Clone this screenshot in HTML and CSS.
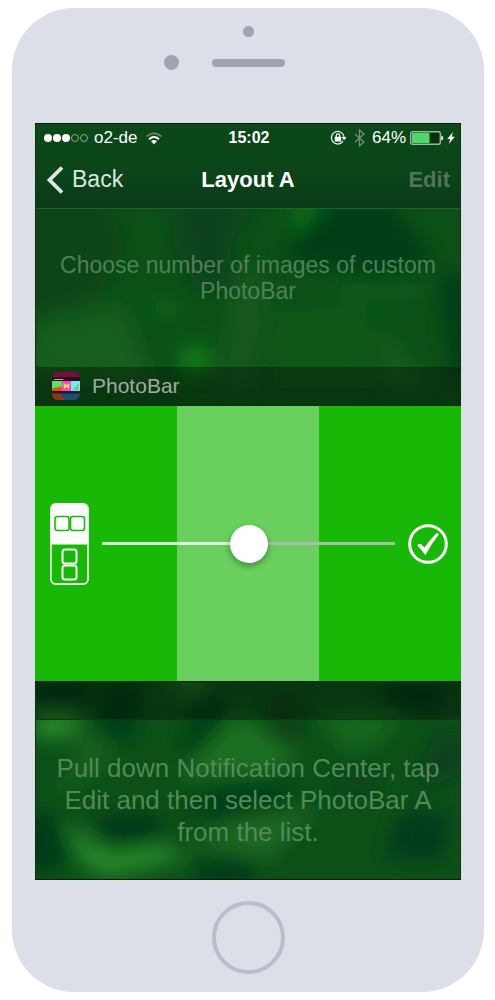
FILE: index.html
```html
<!DOCTYPE html>
<html lang="en">
<head>
<meta charset="utf-8">
<meta name="viewport" content="width=device-width, initial-scale=1">
<title>PhotoBar – Layout A</title>
<link rel="stylesheet" href="styles.css">
</head>
<body>
<div class="phone">
  <div class="bezel-top">
    <span class="camera"></span>
    <div class="earpiece">
      <span class="sensor"></span>
      <span class="speaker"></span>
    </div>
  </div>

  <main class="screen">
    <svg class="wallpaper" viewBox="0 0 426 757" preserveAspectRatio="none" aria-hidden="true">
      <defs>
        <filter id="soft" x="-50%" y="-50%" width="200%" height="200%"><feGaussianBlur stdDeviation="10"/></filter>
      </defs>
      <rect width="426" height="757" fill="#0c5018"/>
      <g filter="url(#soft)">
        <path d="M-20 70H75L90 130L60 175L-20 200Z" fill="#094418"/>
        <path d="M135 70H225L195 120L200 170L160 165L140 120Z" fill="#0b431b"/>
        <path d="M285 75H355L400 140L340 150L245 135Z" fill="#053c18"/>
        <path d="M255 75H295L262 115Z" fill="#0d6a18"/>
        <path d="M405 150H440V250H415Z" fill="#053c18"/>
        <path d="M0 200L90 180L120 260L-10 250Z" fill="#155e1b"/>
        <path d="M105 170L150 180L135 205Z" fill="#0c5f18"/>
        <ellipse cx="160" cy="238" rx="16" ry="18" fill="#0d7a18"/>
        <path d="M200 145L225 150L232 200L215 265L185 260Z" fill="#18581f"/>
        <path d="M240 190L330 180L340 265H240Z" fill="#0c5818"/>
        <path d="M345 200L390 260H350Z" fill="#165f1c"/>
        <path d="M300 160H390V175L310 180Z" fill="#10581a"/>

        <path d="M0 560L60 560L50 580L0 585Z" fill="#063916"/>
        <path d="M65 560H110L95 622H65Z" fill="#053c16"/>
        <path d="M160 575H195L165 640H145Z" fill="#063f18"/>
        <path d="M230 575H265L270 620H240Z" fill="#073f18"/>
        <path d="M350 560H410V585H350Z" fill="#053516"/>
        <ellipse cx="155" cy="560" rx="17" ry="8" fill="#2b7a24"/>
        <ellipse cx="20" cy="603" rx="26" ry="13" fill="#2a8c2c"/>
        <path d="M50 610L82 620L70 645L20 675Z" fill="#17601e"/>
        <path d="M205 590L265 635L235 650L140 655Z" fill="#1c7022"/>
        <path d="M280 590H370L345 620L310 630Z" fill="#17681f"/>
        <path d="M400 610H430V650L380 670Z" fill="#073f1a"/>
        <ellipse cx="320" cy="660" rx="24" ry="10" fill="#07411a"/>
        <path d="M200 660L265 663L250 682L190 695L140 690Z" fill="#043c17"/>
        <path d="M55 695L120 690L130 715L95 730L65 715Z" fill="#023917"/>
        <path d="M-20 690H20L35 735L10 750H-20Z" fill="#023b18"/>
        <path d="M28 700L75 730L125 722L155 735L75 755L50 745Z" fill="#258a2a"/>
        <path d="M210 695L285 685L255 715L235 738L150 720Z" fill="#1a6720"/>
        <path d="M160 738L225 742L215 770H160Z" fill="#033b17"/>
        <path d="M365 690H415L405 740L350 735Z" fill="#033b1a"/>
      </g>
    </svg>

    <header class="top">
      <div class="status">
        <div class="status-left">
          <svg class="signal" width="46" height="10" viewBox="0 0 46 10" aria-hidden="true">
            <g fill="#fff"><circle cx="5" cy="5" r="4"/><circle cx="14" cy="5" r="4"/><circle cx="23" cy="5" r="4"/></g>
            <g fill="none" stroke="#91a795" stroke-width="1"><circle cx="32" cy="5" r="3.5"/><circle cx="41" cy="5" r="3.5"/></g>
          </svg>
          <span>o2-de</span>
          <svg class="wifi" width="18" height="14" viewBox="0 0 18 14" fill="none" aria-hidden="true">
            <path d="M1.500 5.500Q9-1 16.500 5.500" stroke="#67816b" stroke-width="1.800"/>
            <path d="M4 8.200Q9 3.800 14 8.200" stroke="#fff" stroke-width="2"/>
            <path d="M6 10.300Q9 7.900 12 10.300L9 13.300Z" fill="#fff"/>
          </svg>
        </div>
        <time class="clock">15:02</time>
        <div class="status-right">
          <svg width="17" height="16" viewBox="0 0 17 16" fill="none" aria-hidden="true">
            <path d="M13 11.200A6.300 6.300 0 1 1 14 7" stroke="#dfe7e0" stroke-width="1.300"/>
            <path d="M11.600 7H16.600L14.100 10.300Z" fill="#fff"/>
            <rect x="4.800" y="6.800" width="6.400" height="4.700" rx=".5" fill="#fff"/>
            <path d="M6.200 7V5.700a1.800 1.800 0 0 1 3.600 0V7" stroke="#fff" stroke-width="1.200"/>
          </svg>
          <svg class="bluetooth" width="11" height="18" viewBox="0 0 11 18" fill="none" aria-hidden="true">
            <path d="M1 5L10 13L5.500 17V1L10 5L1 13" stroke="#71907a" stroke-width="1.300"/>
          </svg>
          <span>64%</span>
          <svg class="battery" width="34" height="14" viewBox="0 0 34 14" aria-hidden="true">
            <rect x=".700" y=".700" width="29.600" height="12.600" rx="1.800" fill="#06310f" stroke="#a3b3a6" stroke-width="1.400"/>
            <rect x="2" y="2" width="17.500" height="10" fill="#4cd964"/>
            <path d="M31.300 4.500q2 .5 2 2.500t-2 2.500z" fill="#fff"/>
          </svg>
          <svg width="8" height="14" viewBox="0 0 8 14" aria-hidden="true"><path d="M6 1L.3 8H3.200L1.800 13L7.800 5.700H4.700Z" fill="#fff"/></svg>
        </div>
      </div>
      <nav class="nav">
        <button class="back" type="button">
          <svg width="18" height="28" viewBox="0 0 18 28" fill="none" aria-hidden="true"><path d="M16 1.500L3.500 14L16 26.500" stroke="#e2e5e2" stroke-width="3.800"/></svg>
          Back
        </button>
        <h1 class="title">Layout A</h1>
        <button class="edit" type="button" disabled>Edit</button>
      </nav>
    </header>

    <section class="intro"><p>Choose number of images of custom PhotoBar</p></section>

    <section class="widget">
      <div class="widget-head">
        <svg width="28" height="28" viewBox="0 0 28 28" aria-hidden="true">
          <defs><clipPath id="app"><rect width="28" height="28" rx="6"/></clipPath></defs>
          <g clip-path="url(#app)">
            <rect width="28" height="28" fill="#770e3b"/>
            <rect y="5" width="28" height="5" fill="#300c20"/>
            <path d="M2 7.500H11" stroke="#bfaab5"/>
            <rect y="9" width="10" height="10" fill="#5be65b"/>
            <rect x="10" y="9" width="9" height="10" fill="#f344cf"/>
            <rect x="19" y="9" width="9" height="10" fill="#68f4ed"/>
            <path d="M0 17L4 15L6 16L8 14L10 16V19H0Z" fill="#ed4a18"/>
            <path d="M11.500 11L14.500 13L17.500 11L17 17L14.500 15L12 17Z" fill="#f8df40"/>
            <path d="M21 19L23 15L24 18L26 12V19" stroke="#87a985" fill="none"/>
            <rect y="19" width="28" height="3" fill="#211c2a"/>
            <path d="M0 21.500H9L14 28H0Z" fill="#883b14"/>
            <path d="M8 21.500H28V28H13Z" fill="#214b70"/>
          </g>
        </svg>
        <h2 class="widget-name">PhotoBar</h2>
      </div>
      <div class="picker">
        <svg width="39" height="82" viewBox="0 0 39 82" fill="none" aria-hidden="true">
          <rect x=".900" y=".900" width="37.200" height="80.200" rx="5" stroke="#fff" stroke-width="1.600"/>
          <path d="M1 41.500V6a5 5 0 0 1 5-5H33a5 5 0 0 1 5 5V41.500Z" fill="#fff"/>
          <g stroke="#18b807" stroke-width="1.600"><rect x="5" y="13.500" width="14" height="14" rx="2.500"/><rect x="20.500" y="13.500" width="14" height="14" rx="2.500"/></g>
          <g stroke="#fff" stroke-width="2"><rect x="12.500" y="46.500" width="14" height="14" rx="2.500"/><rect x="12.500" y="62.500" width="14" height="14" rx="2.500"/></g>
        </svg>
        <input class="slider" type="range" min="0" max="100" value="50" aria-label="Number of images">
        <button class="confirm" type="button" aria-label="Confirm">
          <svg width="40" height="40" viewBox="0 0 40 40" fill="none" aria-hidden="true">
            <circle cx="20" cy="20" r="18.300" stroke="#fff" stroke-width="3"/>
            <path d="M9.300 21.500Q10.500 19 13 20L16.500 23.500Q22 15.500 29 8.800L30.800 10.500Q23.500 19.500 17.300 31.300Q13.500 25.500 9.300 21.500Z" fill="#fff"/>
          </svg>
        </button>
      </div>
      <div class="widget-foot"></div>
    </section>

    <section class="help"><p>Pull down Notification Center, tap Edit and then select PhotoBar A from the list.</p></section>
  </main>

  <div class="bezel-bottom"><button class="home" type="button" aria-label="Home"></button></div>
</div>
</body>
</html>
```

FILE: styles.css
```css
* { box-sizing: border-box; }

body {
  margin: 0;
  padding: 8px 11px 8px 12px;
  background: #fff;
  color: #fff;
  font-family: "Liberation Sans", Arial, sans-serif;
}

h1, h2, p { margin: 0; font-weight: 400; }
svg { display: block; flex: none; }
button {
  padding: 0;
  border: 0;
  background: none;
  color: inherit;
  font: inherit;
}

.phone {
  padding: 0 23px;
  border-radius: 62px;
  background: #dcdfe7;
}

.bezel-top {
  display: flex;
  flex-direction: column;
  align-items: center;
  gap: 18px;
  padding: 18px 0 53px;
}
.camera, .sensor, .speaker { background: #a0a3b3; }
.camera { width: 11px; height: 11px; border-radius: 50%; }
.earpiece {
  display: grid;
  grid-template-columns: 1fr 73px 1fr;
  align-items: center;
  column-gap: 33px;
  width: 100%;
}
.sensor { justify-self: end; width: 15px; height: 15px; border-radius: 50%; }
.speaker { height: 8px; border-radius: 4px; }

.screen {
  position: relative;
  z-index: 0;
  overflow: hidden;
  border-top: 1px solid #04200c;
  border-bottom: 1px solid #04200c;
}
.wallpaper {
  position: absolute;
  inset: 0;
  z-index: -1;
  width: 100%;
  height: 100%;
}

.top, .intro, .widget-head, .widget-foot, .help {
  border-left: 1px solid #063312;
  border-right: 1px solid #063312;
}

.top {
  border-bottom: 1px solid #255f30;
  background: linear-gradient(#0b4918, #0b4418 60%, #0b3a18);
}
.status {
  display: grid;
  grid-template-columns: 1fr auto 1fr;
  align-items: center;
  height: 27px;
  padding: 0 5px 0 7px;
  font-size: 17px;
}
.status-left, .status-right { display: flex; align-items: center; }
.status-left { gap: 5px; }
.wifi { margin-left: 3px; }
.status-right { justify-content: flex-end; gap: 4px; }
.bluetooth { margin: 0 3px; }
.battery { margin-right: -1px; }
.clock { font-size: 16px; font-weight: 700; }

.nav {
  display: grid;
  grid-template-columns: 1fr auto 1fr;
  align-items: center;
  height: 57px;
  padding: 0 10px;
  font-size: 23px;
}
.back { display: flex; align-items: center; gap: 8px; color: #dfe5e0; }
.title { font-size: 22px; font-weight: 700; }
.edit { justify-self: end; color: #54735b; font-size: 22px; font-weight: 700; }

.intro {
  padding: 43px 20px 63px;
  color: #4f8158;
  font-size: 23px;
  line-height: 26px;
  text-align: center;
}

.widget-head, .widget-foot { height: 39px; background: rgb(0 0 0 / 32%); }
.widget-head {
  display: flex;
  align-items: center;
  gap: 12px;
  padding: 0 16px;
  border-bottom: 1px solid #06310e;
}
.widget-name { color: #a1aba2; font-size: 21px; }
.widget-foot {
  border-top: 1px solid #06280e;
  border-bottom: 1px solid #093b12;
}

.picker {
  display: flex;
  align-items: center;
  gap: 13px;
  height: 275px;
  padding: 0 13px 0 15px;
  background: linear-gradient(90deg, #18b807 33.300%, #6ad05d 33.300% 66.700%, #18b807 66.700%);
}
.slider {
  flex: 1;
  min-width: 0;
  height: 38px;
  margin: 0;
  appearance: none;
  background: linear-gradient(90deg, #e7ede6 50%, #b4b5b4 50%) center / 100% 3px no-repeat;
}
.slider::-webkit-slider-thumb {
  width: 38px;
  height: 38px;
  appearance: none;
  border-radius: 50%;
  background: #fff;
  box-shadow: 0 3px 7px rgb(0 0 0 / 35%);
}

.help {
  padding: 32px 12px 31px;
  color: #528a5a;
  font-size: 26px;
  line-height: 32px;
  text-align: center;
}

.bezel-bottom { display: flex; justify-content: center; padding: 21px 0 18px; }
.home { width: 73px; height: 73px; border: 4px solid #bbbdcb; border-radius: 50%; }
```
